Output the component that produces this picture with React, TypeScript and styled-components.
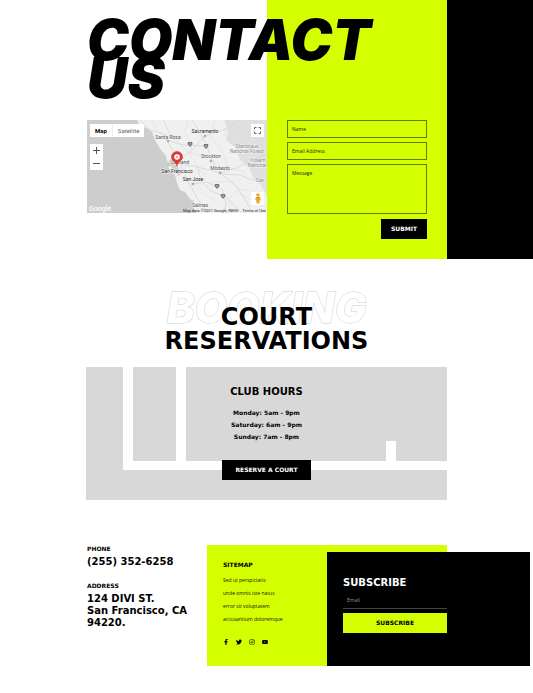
import React from "react";
import styled, { createGlobalStyle } from "styled-components";
import { FaFacebookF, FaTwitter, FaInstagram, FaYoutube } from "react-icons/fa";

const lime = "#d4ff00";
const wide = '"DejaVu Sans", Verdana, sans-serif';
const body = '"Open Sans", sans-serif';
const display = "Inter, sans-serif";

const GlobalStyle = createGlobalStyle`
  *, *::before, *::after { box-sizing: border-box; }
  body { margin: 0; background: #fff; color: #000; font-family: ${body}; }
  h1, h2, h3, p, ul, address { margin: 0; padding: 0; font-style: normal; }
  button, input, textarea { font: inherit; border-radius: 0; }
`;

const Hero = styled.section`
  display: grid;
  grid-template-columns: minmax(0, 87fr) minmax(0, 180fr) minmax(0, 180fr) minmax(0, 86fr);
  grid-template-rows: 120px auto;
`;

const HeroPanel = styled.div<{ $column: number; $color: string }>`
  grid-column: ${(p) => p.$column};
  grid-row: 1 / 3;
  background: ${(p) => p.$color};
`;

const PageTitle = styled.h1`
  grid-column: 2 / 4;
  grid-row: 1;
  z-index: 1;
  padding-top: 21px;
  font: italic 900 56px/38px ${display};
`;

const MapFrame = styled.div`
  grid-column: 2;
  grid-row: 2;
  position: relative;
  height: 93px;
  overflow: hidden;
  background: #cdcdcd;
  font-family: Roboto, sans-serif;
`;

const MapDrawing = styled.svg`
  display: block;
  width: 100%;
  height: 100%;
`;

const MapTypes = styled.div`
  position: absolute;
  top: 4px;
  left: 3px;
  display: flex;
  background: #fff;
`;

const MapType = styled.button<{ $active?: boolean }>`
  height: 13px;
  padding: 0 5px;
  border: 0;
  background: none;
  color: ${(p) => (p.$active ? "#000" : "#666")};
  font-size: 6px;
  font-weight: ${(p) => (p.$active ? 700 : 400)};
  & + & { border-left: 1px solid #eee; }
`;

const MapControl = styled.button`
  display: grid;
  place-items: center;
  width: 13px;
  height: 13px;
  padding: 0;
  border: 0;
  background: #fff;
`;

const ZoomControls = styled.div`
  position: absolute;
  top: 24px;
  left: 3px;
`;

const FullscreenSlot = styled.div`
  position: absolute;
  top: 4px;
  right: 3px;
`;

const PegmanSlot = styled.div`
  position: absolute;
  right: 3px;
  bottom: 8px;
`;

const MapLegal = styled.div`
  position: absolute;
  right: 1px;
  bottom: 0;
  display: flex;
  gap: 4px;
  color: #222;
  font-size: 4px;
  line-height: 5px;
  a { color: inherit; text-decoration: none; }
`;

const ContactForm = styled.form`
  grid-column: 3;
  grid-row: 2;
  display: flex;
  flex-direction: column;
  gap: 4px;
  padding: 0 20px 20px;
`;

const Field = styled.input`
  width: 100%;
  height: 18px;
  padding: 0 4px;
  border: 1px solid #667b00;
  background: transparent;
  color: #000;
  font-size: 5px;
  &::placeholder { color: #222; opacity: 1; }
`;

const MessageField = styled(Field).attrs({ as: "textarea" })`
  display: block;
  height: 50px;
  padding: 5px 4px;
  line-height: 7px;
  resize: none;
`;

const DarkButton = styled.button`
  height: 20px;
  padding: 0 10px;
  border: 0;
  background: #000;
  color: #fff;
  font: 700 6px/20px ${wide};
`;

const SubmitButton = styled(DarkButton)`
  align-self: flex-end;
  margin-top: 1px;
`;

const ReserveButton = styled(DarkButton)`
  padding: 0 13px;
`;

const Booking = styled.section`
  width: 67.6%;
  margin: 0 auto;
  padding-top: 29px;
`;

const BookingHead = styled.div`
  display: grid;
  justify-items: center;
  height: 79px;
  > * { grid-area: 1 / 1; }
`;

const OutlineText = styled.p`
  color: #fff;
  -webkit-text-stroke: 1px #cfcfcf;
  paint-order: stroke fill;
  font: italic 800 42px/40px ${display};
  white-space: nowrap;
`;

const BookingTitle = styled.h2`
  z-index: 1;
  padding-top: 17px;
  text-align: center;
  font: 700 24px/24px ${wide};
`;

const Court = styled.div`
  display: flex;
  flex-direction: column;
  align-items: center;
  height: 133px;
  padding-top: 18px;
  background:
    linear-gradient(#fff, #fff) 37px 0 / 10px 103px no-repeat,
    linear-gradient(#fff, #fff) 90px 0 / 10px 94px no-repeat,
    linear-gradient(#fff, #fff) 37px 94px / 100% 9px no-repeat,
    linear-gradient(#fff, #fff) right 51px top 74px / 10px 20px no-repeat,
    #d8d8d8;
  text-align: center;
`;

const ClubTitle = styled.h3`
  font: 700 10px/14px ${wide};
`;

const Hours = styled.ul`
  margin: 8px 0 17px;
  list-style: none;
  font: 700 6px/12px ${wide};
`;

const Footer = styled.footer`
  display: grid;
  grid-template-columns:
    minmax(0, 87fr) minmax(0, 120fr) minmax(0, 120fr) minmax(0, 120fr)
    minmax(0, 83fr) minmax(0, 3fr);
  grid-template-rows: 7px auto;
  margin: 45px 0 27px;
`;

const ContactInfo = styled.address`
  grid-column: 2;
  grid-row: 1 / 3;
`;

const SmallLabel = styled.h3`
  font: 700 6px/8px ${wide};
`;

const InfoText = styled.p`
  margin: 3px 0 14px;
  font: 700 10px/12px ${wide};
  white-space: nowrap;
`;

const LimeBand = styled.div`
  grid-column: 3 / 5;
  grid-row: 1 / 3;
  background: ${lime};
`;

const Sitemap = styled.nav`
  grid-column: 3;
  grid-row: 1 / 3;
  z-index: 1;
  padding: 16px 0 21px 16px;
`;

const SitemapList = styled.ul`
  margin-top: 5px;
  list-style: none;
  font-size: 5px;
  line-height: 13px;
  white-space: nowrap;
  a { color: #111; text-decoration: none; }
`;

const Social = styled.div`
  display: flex;
  gap: 7px;
  margin-top: 13px;
  a { display: block; height: 6px; color: #000; font-size: 6px; }
  svg { display: block; }
`;

const Subscribe = styled.form`
  grid-column: 4 / 6;
  grid-row: 2;
  display: grid;
  grid-template-columns: minmax(0, 120fr) minmax(0, 83fr);
  align-content: start;
  padding-top: 24px;
  background: #000;
  > * { grid-column: 1; margin-left: 16px; }
`;

const SubscribeTitle = styled.h2`
  color: #fff;
  font: 700 10px/14px ${wide};
`;

const EmailField = styled.input`
  height: 17px;
  margin-top: 2px;
  padding: 0 4px;
  border: 0;
  border-bottom: 1px solid #444;
  background: transparent;
  color: #fff;
  font-size: 5px;
  &::placeholder { color: #999; opacity: 1; }
`;

const SubscribeButton = styled(DarkButton)`
  margin-top: 4px;
  background: ${lime};
  color: #000;
`;

const cities: [string, number, number, boolean?][] = [
  ["Sacramento", 118, 13, true],
  ["Santa Rosa", 81, 19],
  ["Stockton", 124, 38],
  ["Oakland", 93, 44],
  ["San Francisco", 90, 53, true],
  ["Modesto", 133, 50],
  ["San Jose", 106, 61, true],
  ["Salinas", 113, 87],
];

const dots = [[118, 16], [81, 21], [124, 41], [133, 53], [106, 64]];
const shields = [[103, 24], [119, 26], [130, 66], [136, 76]];

const hours = ["Monday: 5am - 9pm", "Saturday: 6am - 9pm", "Sunday: 7am - 8pm"];
const links = ["Sed ut perspiciatis", "unde omnis iste natus", "error sit voluptatem", "accusantium doloremque"];

function AreaMap() {
  return (
    <MapFrame>
      <MapDrawing viewBox="0 0 180 93" preserveAspectRatio="xMidYMid slice" role="img" aria-label="Map of San Francisco">
        <path fill="#f0f0f0" d="M50 0 53 6 60 8 65 12 68 20 74 30 79 36 80 41 84 44 81 48 88 55 90 63 93 70 98 72 103 79 107 81 106 87 109 93H180V0Z" />
        <path fill="#dfdfdf" d="M137 0 141 10 139 20 149 28 153 40 162 47 167 59 174 65 180 76V0Z" />
        <path fill="#cdcdcd" d="M82 40 86 39 90 45 94 54 91 56 87 50 83 45Z" />
        <g fill="none" stroke="#d6d6d6">
          <path d="M53 0 61 9 76 14 84 27 92 42 100 59 110 78 121 93M105 0 112 11 119 24 125 40 135 54 151 68 166 93M119 15 107 28 97 37 91 43M118 16 139 9 152 0M94 45 107 46 122 50 133 53 149 48 180 34M80 20 96 25 119 26M105 64 119 62 135 69 139 84 137 93M76 0 82 12 91 20M136 54 153 55 165 60 180 61M110 46 114 60 124 71 139 77 154 92" strokeWidth=".8" />
          <path d="M64 0 71 12 88 18 99 31 118 37M101 1 98 12 105 24 103 35 112 49 120 58M128 0 123 16 134 29 141 47 158 52M98 57 108 61 117 74 129 81M141 0 137 14 145 24 155 28M157 0 160 14 180 22M121 63 146 61 154 75 180 88M145 93 141 79 150 70 166 70" strokeWidth=".4" />
        </g>
        <g fill="#777">
          {dots.map(([x, y]) => <circle key={`${x}-${y}`} cx={x} cy={y} r="1" fill="#eee" stroke="#666" strokeWidth=".5" />)}
          {shields.map(([x, y]) => (
            <g key={`${x}-${y}`}>
              <path d={`M${x - 2} ${y - 2}h4l.5 2-2.5 3-2.5-3Z`} />
              <path d={`M${x} ${y - 1}v2`} stroke="#fff" strokeWidth=".6" />
            </g>
          ))}
        </g>
        <g textAnchor="middle" fill="#555" stroke="#f4f4f4" strokeWidth="1" paintOrder="stroke" fontSize="5">
          {cities.map(([name, x, y, strong]) => (
            <text key={name} x={x} y={y} fill={strong ? "#222" : "#555"}>{name}</text>
          ))}
          <text x="160" y="28" fill="#888">Stanislaus</text>
          <text x="160" y="33" fill="#888">National Forest</text>
          <text x="171" y="42" fill="#888">Yosem</text>
          <text x="170" y="47" fill="#888">National</text>
          <text x="173" y="62" fill="#888">Sier</text>
        </g>
        <path fill="#df3b36" stroke="#b62724" strokeWidth=".5" d="M90 46C89 41 84.500 41 84.500 37a5.500 5.500 0 0 1 11 0C95.500 41 91 41 90 46Z" />
        <circle cx="90" cy="37" r="2.800" fill="#fff" />
        <circle cx="90" cy="37" r="1.200" fill="#df3b36" opacity=".5" />
        <text x="2" y="91" fill="#fff" fontSize="7" fontWeight="500">Google</text>
      </MapDrawing>
      <MapTypes>
        <MapType type="button" $active>Map</MapType>
        <MapType type="button">Satellite</MapType>
      </MapTypes>
      <ZoomControls>
        <MapControl type="button" aria-label="Zoom in">
          <svg width="7" height="7" viewBox="0 0 7 7" stroke="#555"><path d="M0 3.500H7M3.500 0V7" /></svg>
        </MapControl>
        <MapControl type="button" aria-label="Zoom out">
          <svg width="7" height="7" viewBox="0 0 7 7" stroke="#555"><path d="M0 3.500H7" /></svg>
        </MapControl>
      </ZoomControls>
      <FullscreenSlot>
        <MapControl type="button" aria-label="Full screen">
          <svg width="7" height="7" viewBox="0 0 7 7" fill="none" stroke="#666"><path d="M.5 2.500V.5H2.500M4.500.5H6.500V2.500M6.500 4.500V6.500H4.500M2.500 6.500H.5V4.500" /></svg>
        </MapControl>
      </FullscreenSlot>
      <PegmanSlot>
        <MapControl type="button" aria-label="Street view">
          <svg width="8" height="11" viewBox="0 0 8 11" fill="#e9ad28">
            <circle cx="4" cy="2" r="1.800" />
            <path d="M2 4H6L6.800 7 5.800 7.500 5.400 10.500H2.600L2.200 7.500 1.200 7Z" />
            <path d="M2.500 4 4 5.500 5.500 4Z" fill="#b47d10" />
          </svg>
        </MapControl>
      </PegmanSlot>
      <MapLegal>
        <span>Map data ©2021 Google, INEGI</span>
        <a href="#terms">Terms of Use</a>
      </MapLegal>
    </MapFrame>
  );
}

export default function App() {
  return (
    <>
      <GlobalStyle />
      <main>
        <Hero>
          <HeroPanel $column={3} $color={lime} />
          <HeroPanel $column={4} $color="#000" />
          <PageTitle>CONTACT<br />US</PageTitle>
          <AreaMap />
          <ContactForm>
            <Field type="text" placeholder="Name" aria-label="Name" />
            <Field type="email" placeholder="Email Address" aria-label="Email Address" />
            <MessageField placeholder="Message" aria-label="Message" />
            <SubmitButton type="submit">SUBMIT</SubmitButton>
          </ContactForm>
        </Hero>
        <Booking>
          <BookingHead>
            <OutlineText>BOOKING</OutlineText>
            <BookingTitle>COURT<br />RESERVATIONS</BookingTitle>
          </BookingHead>
          <Court>
            <ClubTitle>CLUB HOURS</ClubTitle>
            <Hours>{hours.map((h) => <li key={h}>{h}</li>)}</Hours>
            <ReserveButton type="button">RESERVE A COURT</ReserveButton>
          </Court>
        </Booking>
      </main>
      <Footer>
        <ContactInfo>
          <SmallLabel>PHONE</SmallLabel>
          <InfoText>(255) 352-6258</InfoText>
          <SmallLabel>ADDRESS</SmallLabel>
          <InfoText>124 DIVI ST.<br />San Francisco, CA<br />94220.</InfoText>
        </ContactInfo>
        <LimeBand />
        <Sitemap>
          <SmallLabel>SITEMAP</SmallLabel>
          <SitemapList>{links.map((l) => <li key={l}><a href="#sitemap">{l}</a></li>)}</SitemapList>
          <Social>
            <a href="#facebook" aria-label="Facebook"><FaFacebookF /></a>
            <a href="#twitter" aria-label="Twitter"><FaTwitter /></a>
            <a href="#instagram" aria-label="Instagram"><FaInstagram /></a>
            <a href="#youtube" aria-label="YouTube"><FaYoutube /></a>
          </Social>
        </Sitemap>
        <Subscribe>
          <SubscribeTitle>SUBSCRIBE</SubscribeTitle>
          <EmailField type="email" placeholder="Email" aria-label="Email" />
          <SubscribeButton type="submit">SUBSCRIBE</SubscribeButton>
        </Subscribe>
      </Footer>
    </>
  );
}
